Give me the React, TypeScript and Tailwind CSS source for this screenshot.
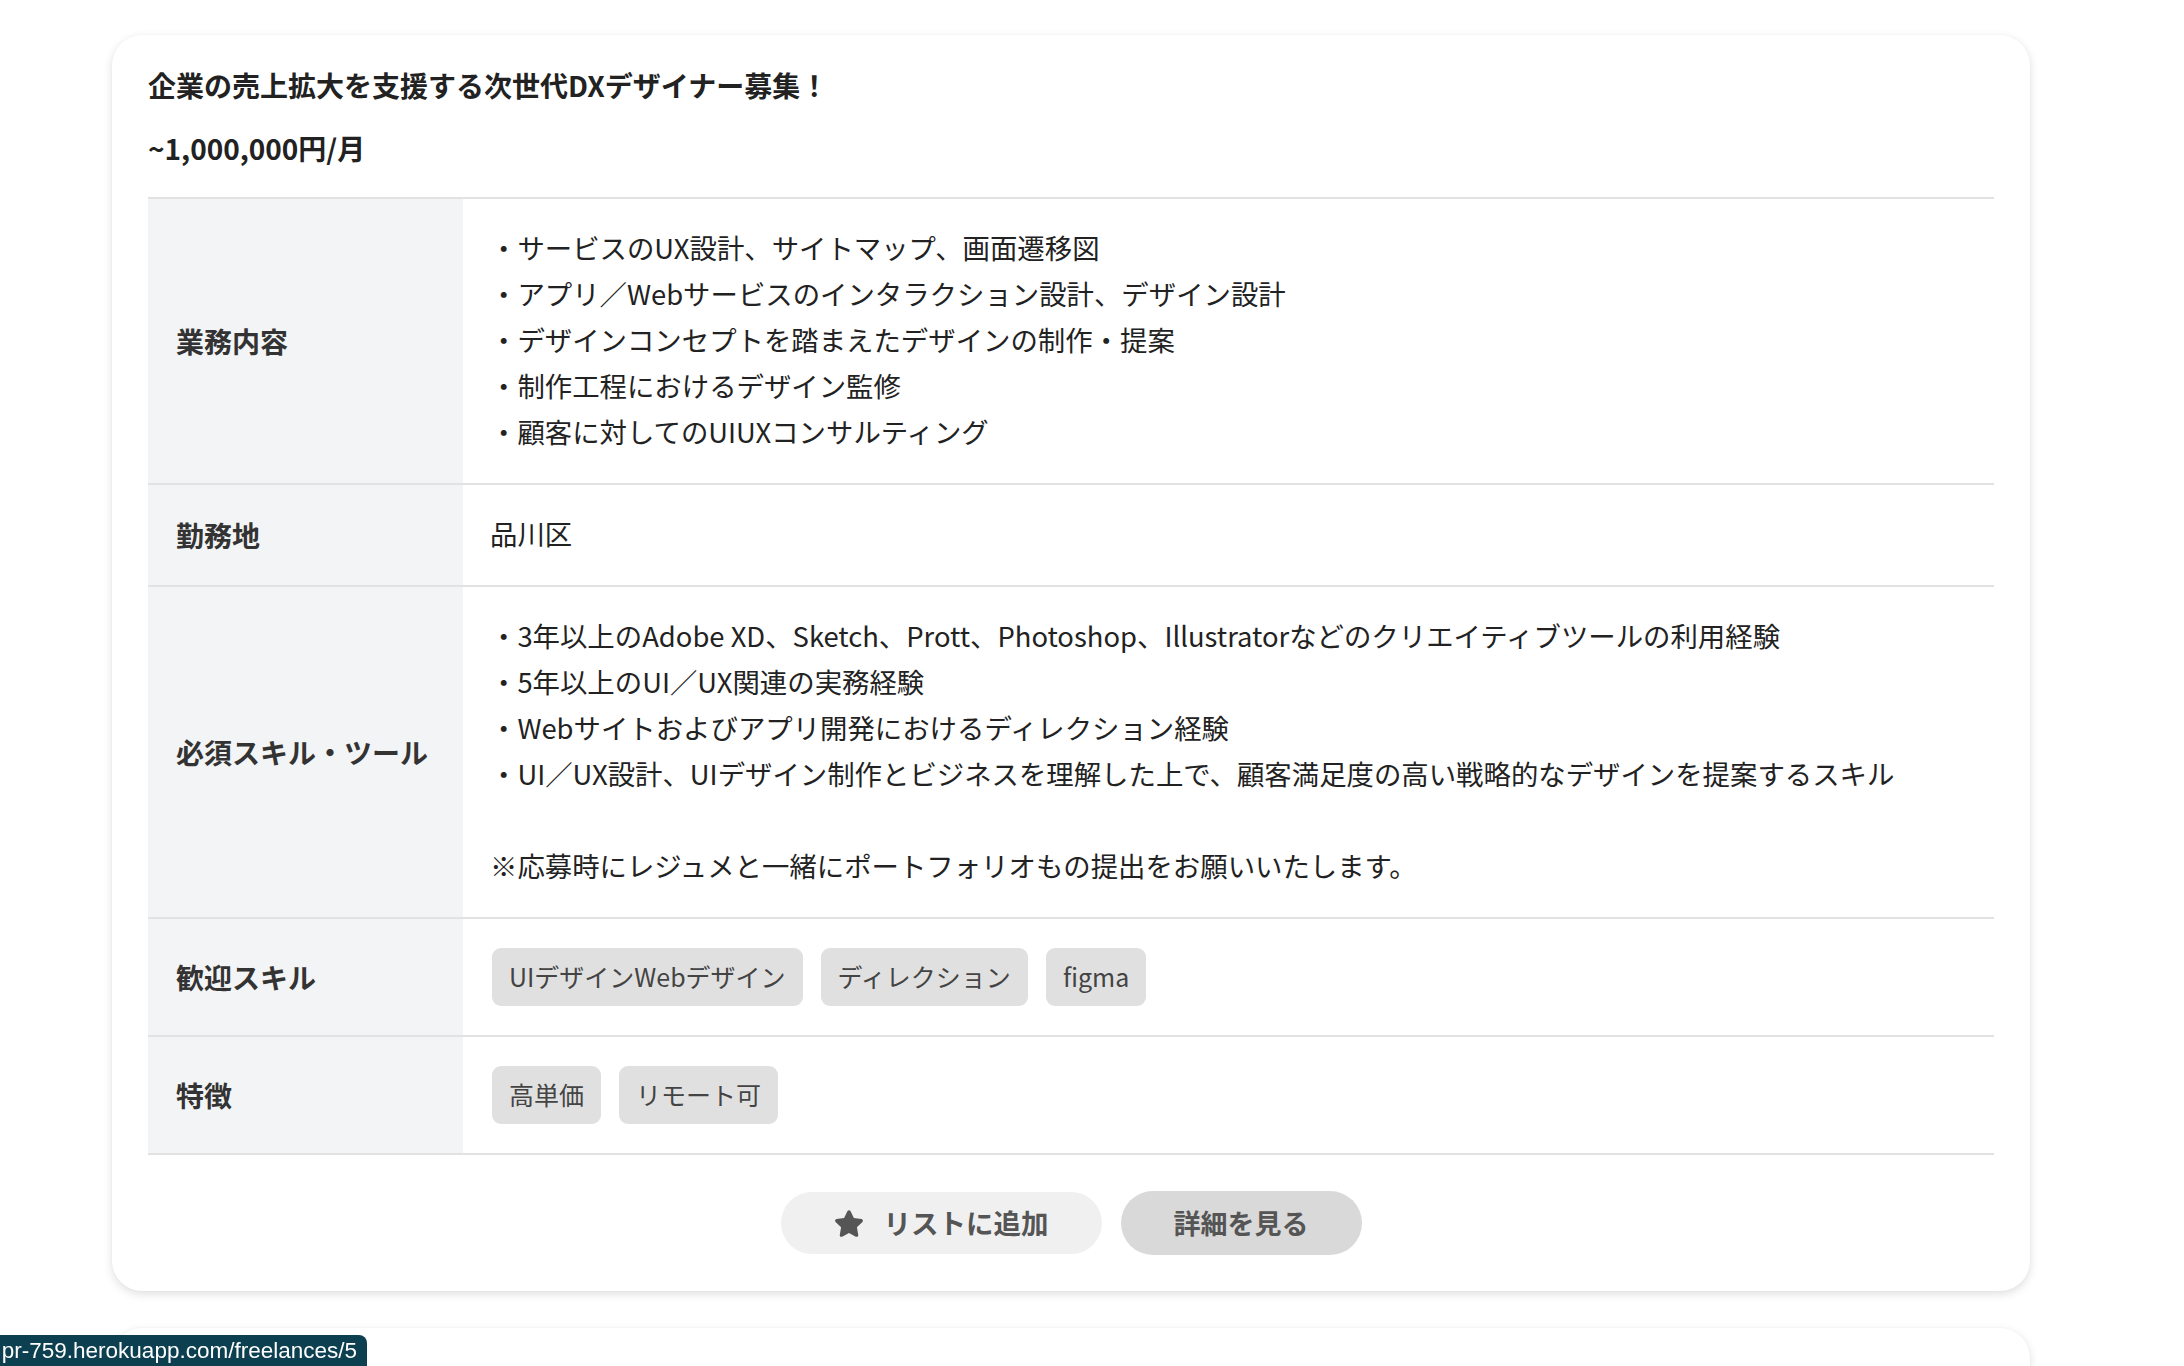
import React from 'react';
import { FaStar } from 'react-icons/fa';

type Row = {
  label: string;
  lines?: string[];
  tags?: string[];
};

const rows: Row[] = [
  {
    label: '業務内容',
    lines: [
      '・サービスのUX設計、サイトマップ、画面遷移図',
      '・アプリ／Webサービスのインタラクション設計、デザイン設計',
      '・デザインコンセプトを踏まえたデザインの制作・提案',
      '・制作工程におけるデザイン監修',
      '・顧客に対してのUIUXコンサルティング',
    ],
  },
  { label: '勤務地', lines: ['品川区'] },
  {
    label: '必須スキル・ツール',
    lines: [
      '・3年以上のAdobe XD、Sketch、Prott、Photoshop、Illustratorなどのクリエイティブツールの利用経験',
      '・5年以上のUI／UX関連の実務経験',
      '・Webサイトおよびアプリ開発におけるディレクション経験',
      '・UI／UX設計、UIデザイン制作とビジネスを理解した上で、顧客満足度の高い戦略的なデザインを提案するスキル',
      '',
      '※応募時にレジュメと一緒にポートフォリオもの提出をお願いいたします。',
    ],
  },
  { label: '歓迎スキル', tags: ['UIデザインWebデザイン', 'ディレクション', 'figma'] },
  { label: '特徴', tags: ['高単価', 'リモート可'] },
];

const JobCard: React.FC = () => {
  return (
    <div className="w-[1918px] rounded-[30px] bg-white px-[36px] pt-[30px] pb-[36px] shadow-[0_3px_10px_rgba(0,0,0,0.13),0_0_2px_rgba(0,0,0,0.04)]">
      <h2 className="text-[28px] font-bold leading-[40px] text-[#222]">
        企業の売上拡大を支援する次世代DXデザイナー募集！
      </h2>
      <p className="mt-[23px] text-[28px] font-bold leading-[40px] text-[#222]">~1,000,000円/月</p>

      <div className="mt-[29px] border-t-2 border-[#e2e2e2]">
        {rows.map((row) => (
          <div key={row.label} className="grid grid-cols-[315px_1fr] border-b-2 border-[#e2e2e2]">
            <div className="flex items-center bg-[#f3f4f6] pl-[28px] text-[28px] font-bold text-[#333]">
              {row.label}
            </div>
            {row.tags ? (
              <div className="flex items-center gap-[18px] py-[29px] pl-[29px]">
                {row.tags.map((tag) => (
                  <span
                    key={tag}
                    className="flex h-[58px] items-center rounded-[9px] bg-[#e0e0e0] px-[17px] text-[25px] text-[#444]"
                  >
                    {tag}
                  </span>
                ))}
              </div>
            ) : (
              <div className="pt-[25px] pb-[29px] pl-[27px] text-[27.4px] leading-[46px] text-[#222]">
                {row.lines!.map((line, i) => (
                  <p key={i} className="h-[46px]">
                    {line}
                  </p>
                ))}
              </div>
            )}
          </div>
        ))}
      </div>

      <div className="mt-[36px] flex items-center justify-center gap-[19px]">
        <button className="flex h-[62px] items-center gap-[20px] rounded-full bg-[#f0f0f0] px-[53px] text-[27.5px] font-bold text-[#555]">
          <FaStar className="h-[29px] w-[30px]" />
          リストに追加
        </button>
        <button className="flex h-[64px] items-center rounded-full bg-[#d9d9d9] px-[53px] text-[27px] font-bold text-[#555]">
          詳細を見る
        </button>
      </div>
    </div>
  );
};

export default function App() {
  return (
    <div className="min-h-screen overflow-hidden bg-white font-['Noto_Sans_CJK_JP','Noto_Sans',sans-serif]">
      <div className="flex flex-col gap-[37px] pt-[35px] pl-[112px]">
        <JobCard />
        <div className="h-[400px] w-[1918px] rounded-[30px] bg-white shadow-[0_3px_10px_rgba(0,0,0,0.13),0_0_2px_rgba(0,0,0,0.04)]" />
      </div>

      <div className="fixed bottom-0 left-0 flex h-[31px] w-[367px] items-center justify-end overflow-hidden whitespace-nowrap rounded-tr-[8px] bg-[#0c3f4f] pr-[10px] font-['Liberation_Sans',Arial,sans-serif] text-[22.5px] text-white">
        pr-759.herokuapp.com/freelances/5
      </div>
    </div>
  );
}
